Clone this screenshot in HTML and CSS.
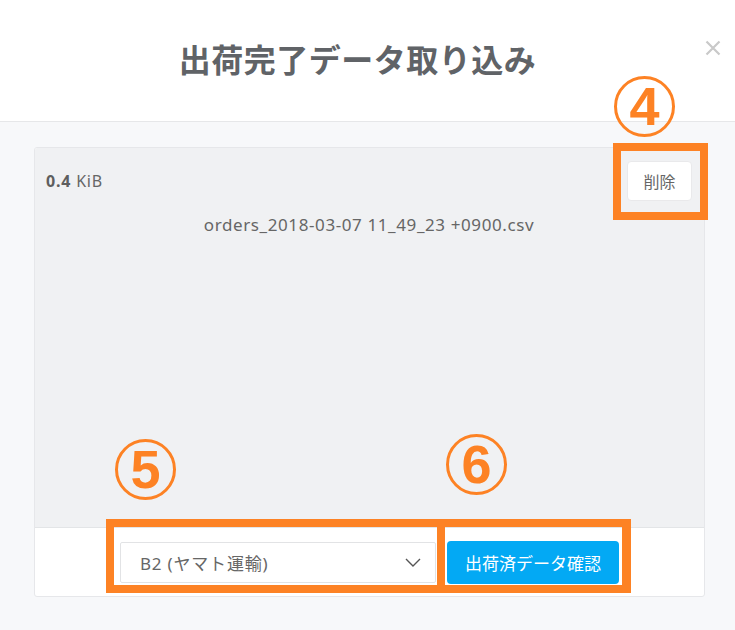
FILE: index.html
```html
<!DOCTYPE html>
<html lang="ja">
<head>
<meta charset="utf-8">
<title>出荷完了データ取り込み</title>
<link rel="stylesheet" href="styles.css">
</head>
<body>
<div class="modal">
  <header class="modal-header">
    <h1 class="modal-title">出荷完了データ取り込み</h1>
    <button class="close-btn" aria-label="閉じる">
      <svg width="16" height="16" viewBox="0 0 16 16"><path d="M1.5 1.5 L14.5 14.5 M14.5 1.5 L1.5 14.5" stroke="#c9c9c9" stroke-width="2.2" fill="none"/></svg>
    </button>
  </header>
  <main class="modal-body">
    <section class="card">
      <div class="preview">
        <div class="preview-top">
          <div class="file-size"><strong>0.4</strong> KiB</div>
          <button class="delete-btn">削除</button>
        </div>
        <div class="file-name">orders_2018-03-07 11_49_23 +0900.csv</div>
      </div>
      <div class="card-footer">
        <div class="select">
          <span class="select-text">B2 (ヤマト運輸)</span>
          <svg class="chevron" width="16" height="9" viewBox="0 0 16 9"><path d="M1 1 L8 8 L15 1" stroke="#555" stroke-width="1.4" fill="none"/></svg>
        </div>
        <button class="confirm-btn">出荷済データ確認</button>
      </div>
    </section>
  </main>

  <div class="mark mark-4">4</div>
  <div class="mark mark-5">5</div>
  <div class="mark mark-6">6</div>
  <div class="hl hl-4"></div>
  <div class="hl hl-5"></div>
  <div class="hl hl-6"></div>
</div>
</body>
</html>
```

FILE: styles.css
```css
* { box-sizing: border-box; }
html, body { margin: 0; padding: 0; }
body {
  width: 735px;
  height: 630px;
  overflow: hidden;
  background: #f7f8fa;
  font-family: "Noto Sans", "Noto Sans CJK JP", sans-serif;
  color: #666;
}
.modal {
  position: relative;
  width: 735px;
  height: 630px;
}
.modal-header {
  height: 122px;
  background: #fff;
  border-bottom: 1px solid #e6e7e9;
  display: flex;
  align-items: flex-start;
}
.modal-title {
  flex: 1;
  margin: 0;
  padding-top: 35px;
  padding-left: 10px;
  text-align: center;
  font-family: "Noto Sans CJK JP", sans-serif;
  font-weight: 700;
  font-size: 32px;
  line-height: 46px;
  letter-spacing: 0.5px;
  color: #606367;
}
.close-btn {
  margin: 40px 14px 0 0;
  padding: 0;
  border: 0;
  background: none;
  width: 16px;
  height: 16px;
  display: flex;
}
.modal-body {
  padding: 25px 30px 0 34px;
}
.card {
  border: 1px solid #e6e7ea;
  border-radius: 3px;
  background: #fff;
  overflow: hidden;
  height: 450px;
  display: flex;
  flex-direction: column;
}
.preview {
  height: 380px;
  background: #f0f1f3;
  border-bottom: 1px solid #e3e5e7;
  padding: 13px 12px 0 11px;
}
.preview-top {
  display: flex;
  justify-content: space-between;
  align-items: center;
}
.file-size {
  font-size: 16px;
  letter-spacing: 0.8px;
  color: #666;
}
.file-size strong { font-weight: 700; color: #5e5e5e; }
.delete-btn {
  width: 65px;
  height: 40px;
  background: #fff;
  border: 1px solid #e9e9eb;
  border-radius: 4px;
  font-family: "Noto Sans CJK JP", sans-serif;
  font-size: 16px;
  color: #666;
  padding: 0;
}
.file-name {
  margin-top: 12px;
  text-align: center;
  font-size: 17px;
  letter-spacing: 0.6px;
  color: #666;
}
.card-footer {
  flex: 1;
  display: flex;
  justify-content: center;
  align-items: center;
  gap: 11px;
}
.select {
  width: 316px;
  height: 41px;
  border: 1px solid #e2e3e5;
  border-radius: 2px;
  background: #fff;
  display: flex;
  align-items: center;
  justify-content: space-between;
  padding: 0 14px 0 19px;
}
.select-text {
  font-family: "Noto Sans", "Noto Sans CJK JP", sans-serif;
  font-size: 17px;
  letter-spacing: 0.8px;
  color: #666;
}
.confirm-btn {
  width: 172px;
  height: 43px;
  background: #03a9f4;
  border: 0;
  border-radius: 4px;
  color: #fff;
  font-family: "Noto Sans CJK JP", sans-serif;
  font-size: 17px;
  padding: 0;
}

/* annotation overlays */
.mark {
  position: absolute;
  width: 61px;
  height: 61px;
  border: 3px solid #fd8224;
  border-radius: 50%;
  color: #fd8224;
  font-family: "Liberation Sans", sans-serif;
  font-weight: 700;
  font-size: 54px;
  line-height: 55px;
  text-align: center;
}
.mark-4 { left: 614px; top: 76px; }
.mark-5 { left: 115px; top: 439px; }
.mark-6 { left: 446px; top: 434px; }
.hl {
  position: absolute;
  border: 8px solid #fd8224;
}
.hl-4 { left: 613px; top: 143px; width: 95px; height: 77px; }
.hl-5 { left: 106px; top: 519px; width: 339px; height: 74px; }
.hl-6 { left: 437px; top: 519px; width: 194px; height: 74px; border-width: 8px 9px 8px 8px; }
```
